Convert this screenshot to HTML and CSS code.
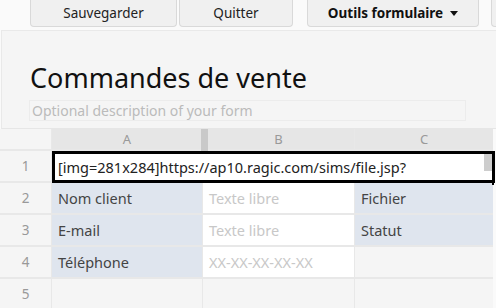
FILE: index.html
```html
<!DOCTYPE html>
<html>
<head>
<meta charset="utf-8">
<title>Commandes de vente</title>
<link rel="stylesheet" href="styles.css">
</head>
<body>
<div class="toolbar">
  <button class="btn btn-save">Sauvegarder</button>
  <button class="btn btn-quit">Quitter</button>
  <button class="btn btn-tools">Outils formulaire<span class="caret"></span></button>
  <button class="btn btn-more"></button>
</div>
<div class="form-head">
  <h1 class="title">Commandes de vente</h1>
  <div class="desc">Optional description of your form</div>
</div>
<div class="sheet">
  <div class="corner"></div>
  <div class="colh colh-a">A<span class="resize"></span></div>
  <div class="colh">B</div>
  <div class="colh">C</div>

  <div class="rowh">1</div>
  <div class="cell editor">[img=281x284]https://ap10.ragic.com/sims/file.jsp?<span class="scroll"></span><span class="fill"></span></div>

  <div class="rowh">2</div>
  <div class="cell label">Nom client</div>
  <div class="cell input">Texte libre</div>
  <div class="cell label">Fichier</div>

  <div class="rowh">3</div>
  <div class="cell label">E-mail</div>
  <div class="cell input">Texte libre</div>
  <div class="cell label">Statut</div>

  <div class="rowh">4</div>
  <div class="cell label">Téléphone</div>
  <div class="cell input">XX-XX-XX-XX-XX</div>
  <div class="cell empty"></div>

  <div class="rowh">5</div>
  <div class="cell empty"></div>
  <div class="cell empty"></div>
  <div class="cell empty"></div>
</div>
</body>
</html>
```
FILE: styles.css
```css
html, body {
  margin: 0;
  padding: 0;
}
body {
  width: 496px;
  height: 308px;
  overflow: hidden;
  background: #fafafa;
  font-family: "Noto Sans", "Open Sans", sans-serif;
  color: #333;
}

.toolbar {
  display: flex;
  height: 27px;
  padding-left: 30px;
  gap: 2px;
  overflow: hidden;
}
.btn {
  flex: none;
  height: 27px;
  padding: 0;
  border: 1px solid #d9d9d9;
  border-top: 0;
  border-radius: 0 0 4px 4px;
  background: #f0f0f0;
  font-family: "Noto Sans", "Open Sans", sans-serif;
  font-size: 13.5px;
  color: #222;
}
.btn-save { width: 147px; }
.btn-quit { width: 114px; }
.btn-tools {
  width: 172px;
  margin-left: 12px;
  font-weight: bold;
  color: #111;
}
.btn-more {
  width: 6px;
  margin-left: 10px;
  border-right: 0;
  border-radius: 0 0 0 4px;
}
.caret {
  display: inline-block;
  width: 0;
  height: 0;
  margin-left: 7px;
  vertical-align: 2px;
  border-left: 4.5px solid transparent;
  border-right: 4.5px solid transparent;
  border-top: 5px solid #111;
}

.form-head {
  margin-top: 3px;
  margin-left: 1px;
  border-top: 1px solid #e9e9e9;
  border-left: 1px solid #e9e9e9;
  border-bottom: 1px solid #e6e6e6;
  background: #f5f5f5;
  padding: 30px 30px 7px 28px;
}
.title {
  margin: 0;
  font-size: 27px;
  line-height: 34px;
  font-weight: normal;
  color: #111;
}
.desc {
  margin: 5px 0 0 -1px;
  padding-left: 2px;
  height: 19px;
  border: 1px solid #ececec;
  font-size: 14px;
  line-height: 19px;
  color: #bbb;
}

.sheet {
  display: grid;
  width: 493px;
  grid-template-columns: 51px 150px 151px 138px;
  grid-template-rows: 20px repeat(5, 30px);
  gap: 2px 1px;
  background: #e8e8e8;
}
.corner {
  background: #f5f5f5;
}
.colh {
  position: relative;
  display: flex;
  align-items: center;
  justify-content: center;
  background: #e6e6e6;
  font-size: 13px;
  color: #999;
}
.resize {
  position: absolute;
  top: 0;
  bottom: -2px;
  right: -6px;
  width: 7px;
  background: #c9c9c9;
  z-index: 2;
}
.rowh {
  display: flex;
  align-items: center;
  justify-content: center;
  background: #f5f5f5;
  font-size: 13.5px;
  color: #999;
}
.cell {
  display: flex;
  align-items: center;
  padding-left: 6px;
  font-size: 14.5px;
  white-space: nowrap;
  overflow: hidden;
}
.label {
  background: #dfe5ee;
  color: #444;
}
.input {
  background: #fff;
  color: #c8c8c8;
}
.empty {
  background: #f5f5f5;
}
.editor {
  position: relative;
  grid-column: 2 / 5;
  align-self: start;
  height: 32px;
  margin-right: -2px;
  box-sizing: border-box;
  border: 3px solid #000;
  padding-left: 3px;
  padding-bottom: 1px;
  background: #fff;
  color: #222;
  overflow: visible;
  z-index: 3;
}
.scroll {
  position: absolute;
  top: 0;
  right: 0;
  width: 8px;
  height: 17px;
  background: #cdcdcd;
}
.fill {
  position: absolute;
  right: -2px;
  bottom: -5px;
  width: 2px;
  height: 5px;
  background: #000;
}
```
